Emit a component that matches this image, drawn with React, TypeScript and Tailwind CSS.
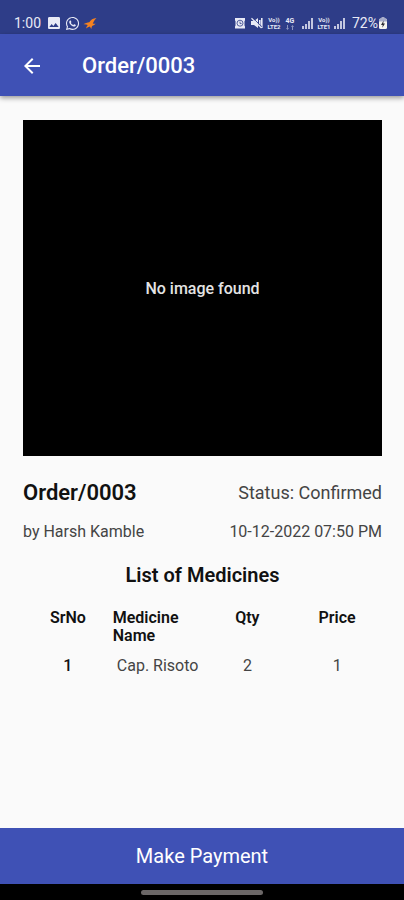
import { FaWhatsapp } from "react-icons/fa"
import { MdArrowBack, MdImage } from "react-icons/md"

interface Medicine {
  name: string
  qty: number
  price: number
}

const order = {
  id: "Order/0003",
  customer: "Harsh Kamble",
  status: "Confirmed",
  placedAt: "10-12-2022 07:50 PM",
}

const medicines: Medicine[] = [{ name: "Cap. Risoto", qty: 2, price: 1 }]

export default function App() {
  return (
    <div className="flex min-h-screen flex-col bg-[#fafafa] font-['Roboto',sans-serif] text-[#111]">
      <StatusBar />
      <AppBar title={order.id} />
      <main className="flex flex-1 flex-col pt-6 pr-[22px] pl-[23px]">
        <div className="flex h-[336px] items-center justify-center bg-black pt-px text-base font-medium text-[#e4e4e4]">
          No image found
        </div>
        <div className="mt-[25px] flex items-center justify-between">
          <h2 className="text-[22px] leading-6 font-semibold">{order.id}</h2>
          <p className="text-[18px] leading-6 text-[#444]">Status: {order.status}</p>
        </div>
        <div className="mt-[15px] flex items-center justify-between text-[16px] leading-6 text-[#444]">
          <p>by {order.customer}</p>
          <p>{order.placedAt}</p>
        </div>
        <h3 className="mt-[19px] text-center text-[20px] leading-6 font-semibold">List of Medicines</h3>
        <MedicineTable items={medicines} />
      </main>
      <button type="button" className="h-[56px] bg-[#3f51b5] text-[20px] text-white">
        Make Payment
      </button>
      <div className="flex h-4 items-center justify-center bg-black">
        <div className="h-[5px] w-[30%] rounded-full bg-[#6b6767]" />
      </div>
    </div>
  )
}

function StatusBar() {
  return (
    <div className="flex h-[34px] items-center justify-between bg-[#2e3d88] pt-3 pr-4 pl-[14px] text-[#e8eaf6]">
      <div className="flex items-center gap-[3px]">
        <span className="mr-[2px] text-[14px] leading-4">1:00</span>
        <MdImage className="h-4 w-4" />
        <FaWhatsapp className="h-[15px] w-[15px]" />
        <BirdIcon />
      </div>
      <div className="flex items-center">
        <AlarmIcon />
        <MutedIcon />
        <VolteLabel sim={2} />
        <NetworkType />
        <SignalIcon />
        <VolteLabel sim={1} />
        <SignalIcon />
        <span className="ml-1 text-[14px] leading-4">72%</span>
        <BatteryIcon />
      </div>
    </div>
  )
}

function AppBar({ title }: { title: string }) {
  return (
    <header className="z-10 flex h-[62px] items-center bg-[#3f51b5] px-5 pt-px text-white shadow-[0_2px_5px_rgba(0,0,0,0.4)]">
      <button type="button" aria-label="Back">
        <MdArrowBack className="h-6 w-6" />
      </button>
      <h1 className="ml-[38px] text-[22px] leading-6 font-medium">{title}</h1>
    </header>
  )
}

function MedicineTable({ items }: { items: Medicine[] }) {
  return (
    <table className="mt-[22px] w-full table-fixed text-center text-[16px] leading-[18px]">
      <thead>
        <tr className="align-top">
          <th className="p-0 font-semibold">SrNo</th>
          <th className="p-0 text-left font-semibold">Medicine Name</th>
          <th className="p-0 font-semibold">Qty</th>
          <th className="p-0 font-semibold">Price</th>
        </tr>
      </thead>
      <tbody className="text-[#444]">
        {items.map((item, i) => (
          <tr key={item.name}>
            <td className="pt-3 font-medium text-[#111]">{i + 1}</td>
            <td className="pt-3">{item.name}</td>
            <td className="pt-3">{item.qty}</td>
            <td className="pt-3">{item.price}</td>
          </tr>
        ))}
      </tbody>
    </table>
  )
}

function VolteLabel({ sim }: { sim: number }) {
  return (
    <span className="flex w-4 flex-col items-center text-[6px] leading-[7px] font-bold">
      <span>Vo))</span>
      <span>LTE{sim}</span>
    </span>
  )
}

function NetworkType() {
  return (
    <span className="mr-1 ml-[2px] flex w-3 flex-col items-center text-[7px] leading-[8px] font-bold">
      <span>4G</span>
      <svg viewBox="0 0 8 5" className="h-[5px] w-2 opacity-50" fill="currentColor">
        <path d="M0 3h1V0h1v3h1L1.500 5zM5 2l1.500-2L8 2H7v3H6V2z" />
      </svg>
    </span>
  )
}

function SignalIcon() {
  return (
    <svg viewBox="0 0 12 12" className="mx-[2px] h-3 w-3" fill="currentColor">
      <path d="M0 9h2v3H0zM3 7h2v5H3zM6 4h2v8H6zM9 1h2v11H9z" opacity="0.8" />
    </svg>
  )
}

function AlarmIcon() {
  return (
    <svg viewBox="0 0 12 12" className="ml-1 h-3 w-3" fill="currentColor">
      <path d="M1 1h10v2.500l-.5.500v4.500l.5 1v2H1v-2l.5-1V4L1 3.500z" />
      <circle cx="6" cy="6.200" r="3" fill="none" stroke="#2e3d88" strokeWidth="0.800" />
      <path d="M6 4.600v2h1.600" fill="none" stroke="#2e3d88" strokeWidth="0.800" />
    </svg>
  )
}

function MutedIcon() {
  return (
    <svg viewBox="0 0 14 12" className="mr-[2px] ml-1 h-3 w-[14px]" fill="currentColor">
      <path d="M1 4h3l4-3v10L4 8H1z" />
      <path d="M9.800 3v6M11.800 1v10" fill="none" stroke="currentColor" strokeWidth="1.600" />
      <path d="M2.500.800 12 9.800" stroke="#2e3d88" strokeWidth="0.900" />
      <path d="M1.500 1.200 11.500 11" stroke="currentColor" strokeWidth="1.200" />
    </svg>
  )
}

function BatteryIcon() {
  return (
    <svg viewBox="0 0 10 14" className="h-[14px] w-[10px]">
      <path d="M3.500 1h3v1.500h-3z" fill="#a5abc9" />
      <rect x="1" y="2.500" width="8" height="10.500" rx="1.500" fill="#f5f5f0" />
      <path d="M1 4a1.500 1.500 0 0 1 1.500-1.500h5A1.500 1.500 0 0 1 9 4v1.500H1z" fill="#a5abc9" />
      <path d="M5.600 4.500 3 9h1.700l-.4 2.800L7 7.600H5.300z" fill="#2b2b35" />
    </svg>
  )
}

function BirdIcon() {
  return (
    <svg viewBox="0 0 14 13" className="h-[13px] w-[14px]" fill="#f58220">
      <path d="M13.500 1C10 1.200 7.500 3 6.300 5.300 4.500 5.800 2 6.200.5 7.200c1.800-.1 3.200.1 4.200.7C4 9 3.300 10.500 3 11.500c1.300-1.100 2.600-1.800 4-2 .4.900.7 1.700 1.300 2.500.1-1.200.4-2.200.8-3.100 1.400-.5 2.700-1.200 3.600-2.200-1 .1-2 .1-2.900-.2C10.800 4.500 11.800 2.500 13.500 1z" />
    </svg>
  )
}
